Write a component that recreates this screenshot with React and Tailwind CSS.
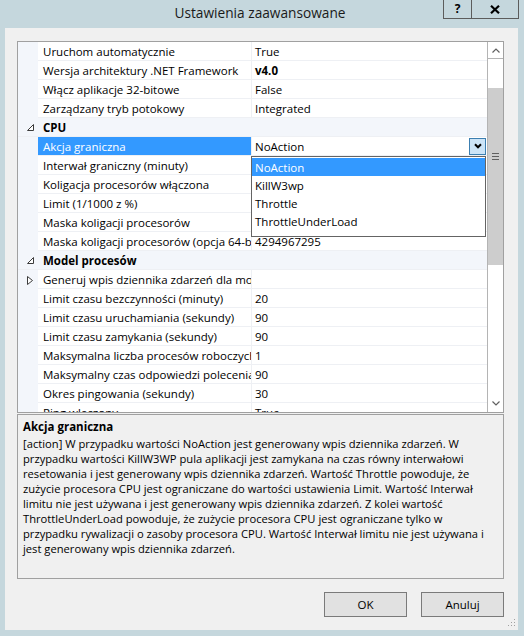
import React from 'react';

// Property rows shown in the grid (top to bottom)
const rows = [
  { name: 'Uruchom automatycznie', value: 'True' },
  { name: 'Wersja architektury .NET Framework', value: 'v4.0', bold: true },
  { name: 'Włącz aplikacje 32-bitowe', value: 'False' },
  { name: 'Zarządzany tryb potokowy', value: 'Integrated' },
  { category: 'CPU' },
  { name: 'Akcja graniczna', value: 'NoAction', selected: true },
  { name: 'Interwał graniczny (minuty)', value: '5' },
  { name: 'Koligacja procesorów włączona', value: 'False' },
  { name: 'Limit (1/1000 z %)', value: '0' },
  { name: 'Maska koligacji procesorów', value: '4294967295' },
  { name: 'Maska koligacji procesorów (opcja 64-bitowa)', value: '4294967295' },
  { category: 'Model procesów' },
  { name: 'Generuj wpis dziennika zdarzeń dla modelu procesów', value: '', collapsed: true },
  { name: 'Limit czasu bezczynności (minuty)', value: '20' },
  { name: 'Limit czasu uruchamiania (sekundy)', value: '90' },
  { name: 'Limit czasu zamykania (sekundy)', value: '90' },
  { name: 'Maksymalna liczba procesów roboczych', value: '1' },
  { name: 'Maksymalny czas odpowiedzi polecenia ping (sekundy)', value: '90' },
  { name: 'Okres pingowania (sekundy)', value: '30' },
  { name: 'Ping włączony', value: 'True' },
  { name: 'Tożsamość', value: 'ApplicationPoolIdentity' },
];

const actionOptions = ['NoAction', 'KillW3wp', 'Throttle', 'ThrottleUnderLoad'];

const descriptionLines = [
  '[action] W przypadku wartości NoAction jest generowany wpis dziennika zdarzeń. W',
  'przypadku wartości KillW3WP pula aplikacji jest zamykana na czas równy interwałowi',
  'resetowania i jest generowany wpis dziennika zdarzeń. Wartość Throttle powoduje, że',
  'zużycie procesora CPU jest ograniczane do wartości ustawienia Limit. Wartość Interwał',
  'limitu nie jest używana i jest generowany wpis dziennika zdarzeń. Z kolei wartość',
  'ThrottleUnderLoad powoduje, że zużycie procesora CPU jest ograniczane tylko w',
  'przypadku rywalizacji o zasoby procesora CPU. Wartość Interwał limitu nie jest używana i',
  'jest generowany wpis dziennika zdarzeń.',
];

function ExpandedGlyph() {
  return (
    <svg width="7" height="7" viewBox="0 0 7 7">
      <polygon points="6.5,0.5 6.5,6.5 0.5,6.5" fill="#fff" stroke="#3c3c3c" strokeWidth="1" />
    </svg>
  );
}

function CollapsedGlyph() {
  return (
    <svg width="6" height="9" viewBox="0 0 6 9">
      <polygon points="0.5,0.5 5.5,4.5 0.5,8.5" fill="#fff" stroke="#3c3c3c" strokeWidth="1" />
    </svg>
  );
}

function DropdownList() {
  return (
    <div className="absolute left-[-1px] top-[19px] z-10 w-[235px] h-[81px] border border-[#646464] bg-white pt-[1px]">
      {actionOptions.map((opt, i) => (
        <div
          key={opt}
          className={`h-[18px] flex items-center pl-[3px] pt-[1px] ${i === 0 ? 'bg-[#3399ff] text-white' : 'text-black'}`}
        >
          {opt}
        </div>
      ))}
    </div>
  );
}

function GridRow({ row }) {
  if (row.category) {
    return (
      <div className="flex h-[19px] bg-[#f3f6fb] border-b border-[#eef0f4]">
        <div className="w-[20px] flex items-center justify-center pl-[4px] pt-[1px]">
          <ExpandedGlyph />
        </div>
        <div className="pl-[5px] pt-[1px] flex items-center font-bold">{row.category}</div>
      </div>
    );
  }
  return (
    <div className="flex h-[19px]">
      <div className="w-[20px] shrink-0 bg-[#f3f6fb] flex items-center justify-center pl-[4px] pt-[1px]">
        {row.collapsed && <CollapsedGlyph />}
      </div>
      <div
        className={`w-[214px] shrink-0 pl-[5px] pt-[1px] flex items-center overflow-hidden whitespace-nowrap border-r border-b border-[#eef0f4] ${
          row.selected ? 'bg-[#3399ff] text-white' : ''
        }`}
      >
        {row.name}
      </div>
      <div
        className={`relative flex-1 flex items-center justify-between pl-[3px] whitespace-nowrap border-b border-[#eef0f4] ${
          row.bold ? 'font-bold' : ''
        }`}
      >
        <span className="pt-[1px]">{row.value}</span>
        {row.selected && (
          <>
            <div className="mr-[1px] w-[17px] h-[17px] border border-[#3c7fb1] bg-[#cce4f7] flex items-center justify-center">
              <svg width="8" height="6" viewBox="0 0 8 6">
                <path d="M1 1.2 L4 4.3 L7 1.2" fill="none" stroke="#000" strokeWidth="2" />
              </svg>
            </div>
            <DropdownList />
          </>
        )}
      </div>
    </div>
  );
}

function Scrollbar() {
  return (
    <div className="w-[16px] shrink-0 border-l border-[#b4b4b4] flex flex-col bg-white">
      <div className="h-[17px] border-b border-[#b4b4b4] flex items-center justify-center">
        <svg width="8" height="5" viewBox="0 0 8 5">
          <path d="M0.5 4.5 L4 1 L7.5 4.5" fill="none" stroke="#606060" strokeWidth="1.2" />
        </svg>
      </div>
      <div className="h-[29px]" />
      <div className="h-[177px] bg-[#cdcdcd] flex flex-col items-center pt-[65px]">
        <div className="w-[7px] flex flex-col gap-[2px]">
          <div className="h-px bg-[#606060]" />
          <div className="h-px bg-[#606060]" />
          <div className="h-px bg-[#606060]" />
        </div>
      </div>
      <div className="flex-1" />
      <div className="h-[17px] flex items-center justify-center">
        <svg width="8" height="5" viewBox="0 0 8 5">
          <path d="M0.5 0.5 L4 4 L7.5 0.5" fill="none" stroke="#606060" strokeWidth="1.2" />
        </svg>
      </div>
    </div>
  );
}

function DialogButton({ children }) {
  return (
    <button className="w-[83px] h-[25px] border border-[#7a7a7a] bg-[#e1e1e1] text-black flex items-center justify-center">
      {children}
    </button>
  );
}

export default function App() {
  return (
    <div className="w-[524px] h-[636px] bg-[#c5d7dd] flex flex-col font-['Open_Sans',sans-serif] text-[11.5px] text-black overflow-hidden">
      {/* title bar */}
      <div className="h-[28px] shrink-0 grid grid-cols-[1fr_auto_1fr]">
        <div />
        <div className="flex items-center text-[13.7px] text-[#1a1a1a] pb-[1px] pr-[4px]">Ustawienia zaawansowane</div>
        <div className="flex justify-end items-start pr-[5px]">
          <div className="w-[29px] h-[19px] border border-t-0 border-[#5c5c5c] flex items-center justify-center font-bold text-[12px] leading-none">
            ?
          </div>
          <div className="w-[47px] h-[19px] border border-l-0 border-t-0 border-[#5c5c5c] flex items-center justify-center">
            <svg width="10" height="9" viewBox="0 0 10 9">
              <path d="M1 0.8 L9 8.2 M9 0.8 L1 8.2" stroke="#000" strokeWidth="2.2" />
            </svg>
          </div>
        </div>
      </div>

      {/* client area */}
      <div className="relative mx-[5px] w-[513px] h-[602px] bg-[#f0f0f0] pl-[12px] pt-[13px] flex flex-col">
        {/* property grid */}
        <div className="w-[487px] h-[372px] border border-[#a0a0a0] bg-white flex">
          <div className="flex-1 overflow-hidden">
            {rows.map((row, i) => (
              <GridRow key={i} row={row} />
            ))}
          </div>
          <Scrollbar />
        </div>

        {/* description */}
        <div className="mt-[1px] w-[487px] h-[165px] border border-[#a0a0a0] bg-[#f0f0f0] px-[5px] pt-[4px] leading-[15px]">
          <div className="font-bold mb-[2px]">Akcja graniczna</div>
          {descriptionLines.map((line, i) => (
            <div key={i} className="whitespace-nowrap text-[11.2px]">
              {line}
            </div>
          ))}
        </div>

        {/* buttons */}
        <div className="mt-[13px] w-[487px] flex justify-end gap-[14px]">
          <DialogButton>OK</DialogButton>
          <DialogButton>Anuluj</DialogButton>
        </div>

        {/* resize grip */}
        <svg className="absolute right-[2px] bottom-[3px]" width="8" height="8" viewBox="0 0 8 8">
          <rect x="6" y="0" width="1" height="1" fill="#a0a0a0" />
          <rect x="3" y="3" width="1" height="1" fill="#a0a0a0" />
          <rect x="6" y="3" width="1" height="1" fill="#a0a0a0" />
          <rect x="0" y="6" width="1" height="1" fill="#a0a0a0" />
          <rect x="3" y="6" width="1" height="1" fill="#a0a0a0" />
          <rect x="6" y="6" width="1" height="1" fill="#a0a0a0" />
        </svg>
      </div>
    </div>
  );
}
